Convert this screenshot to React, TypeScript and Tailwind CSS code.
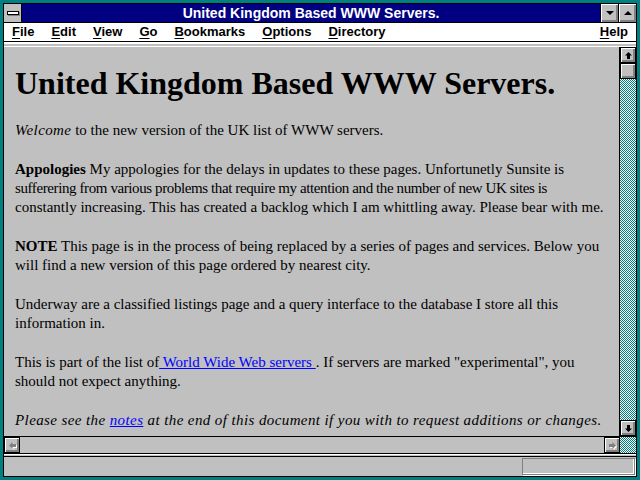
import React from "react";

const checker =
  "bg-[repeating-conic-gradient(#008080_0_25%,#ffffff_0_50%)] bg-[length:2px_2px]";

const bevel =
  "bg-[#c0c0c0] shadow-[inset_1px_1px_0_#ffffff,inset_-1px_-1px_0_#808080,inset_-2px_-2px_0_#808080]";

const Arrow = ({ dir, muted }: { dir: "up" | "down" | "left" | "right"; muted?: boolean }) => {
  const paths: Record<string, string> = {
    up: "M4.5 1 L8 4.5 L6 4.5 L6 8 L3 8 L3 4.5 L1 4.5 Z",
    down: "M4.5 8 L8 4.5 L6 4.5 L6 1 L3 1 L3 4.5 L1 4.5 Z",
    left: "M1 4.5 L4.5 1 L4.5 3 L8 3 L8 6 L4.5 6 L4.5 8 Z",
    right: "M8 4.5 L4.5 1 L4.5 3 L1 3 L1 6 L4.5 6 L4.5 8 Z",
  };
  return (
    <svg width="9" height="9" viewBox="0 0 9 9" className="block">
      {muted && <path d={paths[dir]} fill="#ffffff" transform="translate(1 1)" />}
      <path d={paths[dir]} fill={muted ? "#808080" : "#000000"} />
    </svg>
  );
};

const ScrollButton = ({ dir, muted }: { dir: "up" | "down" | "left" | "right"; muted?: boolean }) => (
  <div className={`w-[16px] h-[16px] shrink-0 flex items-center justify-center border border-black ${bevel}`}>
    <Arrow dir={dir} muted={muted} />
  </div>
);

const MenuItem = ({ first, rest }: { first: string; rest: string }) => (
  <span>
    <span className="underline underline-offset-2">{first}</span>
    {rest}
  </span>
);

export default function App() {
  return (
    <div className="w-[640px] h-[480px] bg-[#008080] p-[3px] font-['Liberation_Sans',Arial,sans-serif]">
      <div className="w-full h-full border border-black flex flex-col bg-[#c0c0c0]">
        {/* Title bar */}
        <div className="h-[19px] flex bg-[#000080] border-b border-black shrink-0">
          <div className="w-[18px] h-[18px] bg-[#c0c0c0] border-r border-black flex items-center justify-center">
            <div className="w-[12px] h-[4px] bg-white border border-black shadow-[1px_1px_0_#808080]" />
          </div>
          <div className="flex-1 text-center text-white font-bold text-[14px] leading-[18px]">
            United Kingdom Based WWW Servers.
          </div>
          <div className={`w-[18px] h-[18px] border-l border-black flex items-center justify-center ${bevel}`}>
            <svg width="8" height="5" viewBox="0 0 8 5"><path d="M0 0 L8 0 L4 4 Z" fill="#000" /></svg>
          </div>
          <div className={`w-[18px] h-[18px] border-l border-black flex items-center justify-center ${bevel}`}>
            <svg width="8" height="5" viewBox="0 0 8 5"><path d="M0 4 L8 4 L4 0 Z" fill="#000" /></svg>
          </div>
        </div>

        {/* Menu bar */}
        <div className="h-[19px] bg-white flex items-center text-[13px] font-bold text-black border-b border-black shrink-0 pl-[8px] pr-[8px]">
          <div className="flex gap-[17px]">
            <MenuItem first="F" rest="ile" />
            <MenuItem first="E" rest="dit" />
            <MenuItem first="V" rest="iew" />
            <MenuItem first="G" rest="o" />
            <MenuItem first="B" rest="ookmarks" />
            <MenuItem first="O" rest="ptions" />
            <MenuItem first="D" rest="irectory" />
          </div>
          <div className="ml-auto">
            <MenuItem first="H" rest="elp" />
          </div>
        </div>

        {/* collapsed toolbar */}
        <div className="h-[5px] border-t-2 border-white bg-[#c0c0c0] border-b border-black shrink-0" />

        {/* Document area */}
        <div className="flex-1 flex min-h-0">
          <div className="flex-1 border-r border-black overflow-hidden pl-[11px] font-['Liberation_Serif','Times_New_Roman',serif] text-black text-[15px] leading-[19.33px] whitespace-nowrap">
            <h1 className="font-bold text-[32px] leading-[36px] mt-[18px] mb-[20px]">
              United Kingdom Based WWW Servers.
            </h1>
            <p className="mb-[19.33px]">
              <i className="tracking-[0.4px]">Welcome</i> to the new version of the UK list of WWW servers.
            </p>
            <p className="mb-[19.33px]">
              <b>Appologies</b> My appologies for the delays in updates to these pages. Unfortunetly Sunsite is
              <br />
              <span className="tracking-[-0.4px]">
                sufferering from various problems that require my attention and the number of new UK sites is
              </span>
              <br />
              constantly increasing. This has created a backlog which I am whittling away. Please bear with me.
            </p>
            <p className="mb-[19.33px]">
              <b>NOTE</b> This page is in the process of being replaced by a series of pages and services. Below you
              <br />
              will find a new version of this page ordered by nearest city.
            </p>
            <p className="mb-[19.33px]">
              Underway are a classified listings page and a query interface to the database I store all this
              <br />
              information in.
            </p>
            <p className="mb-[19.33px]">
              This is part of the list of
              <a className="text-[#0000ff] underline"> World Wide Web servers </a>. If servers are marked
              "experimental", you
              <br />
              should not expect anything.
            </p>
            <p className="italic tracking-[0.4px]">
              Please see the <a className="text-[#0000ff] underline">notes</a> at the end of this document if you
              with to request additions or changes.
            </p>
          </div>
          {/* Vertical scrollbar */}
          <div className="w-[16px] flex flex-col">
            <ScrollButton dir="up" />
            <div className={`w-[16px] h-[16px] shrink-0 border border-black ${bevel}`} />
            <div className={`flex-1 ${checker}`} />
            <ScrollButton dir="down" />
          </div>
        </div>

        {/* Horizontal scrollbar */}
        <div className="h-[17px] flex border-t border-black shrink-0">
          <ScrollButton dir="left" muted />
          <div className="flex-1 bg-[#c0c0c0]" />
          <ScrollButton dir="right" muted />
          <div className={`w-[16px] h-[16px] ${checker}`} />
        </div>

        {/* separator */}
        <div className="h-[4px] border-t border-black bg-[#c0c0c0] shadow-[inset_0_1px_0_#ffffff] border-b shrink-0" />

        {/* Status bar */}
        <div className="h-[19px] shrink-0 flex items-center justify-end pr-[1px] bg-[#c0c0c0]">
          <div className="w-[113px] h-[17px] border border-[#808080] shadow-[inset_-1px_-1px_0_#ffffff,1px_1px_0_#ffffff]" />
        </div>
      </div>
    </div>
  );
}
